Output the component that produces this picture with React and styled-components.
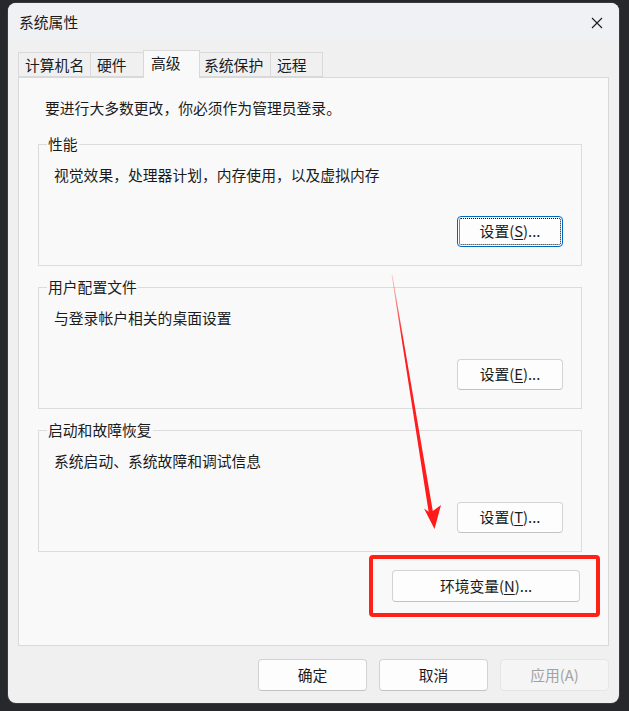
import styled, { createGlobalStyle } from "styled-components";

const Global = createGlobalStyle`
  html, body {
    margin: 0;
    padding: 0;
    background: #27282b;
  }
  body {
    font-family: "Noto Sans CJK SC", "Noto Sans", sans-serif;
    font-size: 14.8px;
    color: #1b1b1b;
    text-spacing-trim: space-all;
  }
`;

const Page = styled.div`
  position: relative;
  width: 629px;
  height: 711px;
  padding: 3px 10px 0 8px;
  box-sizing: border-box;
`;

const Window = styled.div`
  width: 611px;
  height: 700px;
  border-radius: 8px;
  overflow: hidden;
  background: #f0f0f0;
  display: flex;
  flex-direction: column;
  box-shadow: 0 0 0 1px #3a3b3e;
`;

const TitleBar = styled.div`
  height: 37px;
  flex: none;
  background: #eff1f5;
  display: flex;
  align-items: center;
  justify-content: space-between;
  padding: 0 12px 0 11px;
  line-height: 20px;
`;

const CloseBtn = styled.div`
  width: 20px;
  height: 20px;
  display: flex;
  align-items: center;
  justify-content: center;
  margin-top: 3px;
`;

const Body = styled.div`
  flex: 1;
  display: flex;
  flex-direction: column;
  padding: 10px 10px 12px 10px;
`;

const TabRow = styled.div`
  height: 27px;
  display: flex;
  align-items: flex-end;
  padding-left: 1px;
  position: relative;
  z-index: 1;
`;

const Tab = styled.div`
  box-sizing: border-box;
  width: ${(p) => p.$w}px;
  height: ${(p) => (p.$active ? 28 : 25)}px;
  margin: ${(p) => (p.$active ? "0 -2px -1px -2px" : "0 0 0 -1px")};
  padding-left: ${(p) => (p.$active ? 7 : 6)}px;
  padding-top: 2px;
  border: 1px solid #d9d9d9;
  border-bottom: ${(p) => (p.$active ? "none" : "1px solid #d9d9d9")};
  background: ${(p) => (p.$active ? "#f9f9f9" : "#f0f0f0")};
  line-height: 20px;
  white-space: nowrap;
  position: relative;
  z-index: ${(p) => (p.$active ? 2 : 1)};
`;

const Panel = styled.div`
  height: 569px;
  box-sizing: border-box;
  background: #f9f9f9;
  border: 1px solid #d9d9d9;
  padding: 20px 26px 0 19px;
  display: flex;
  flex-direction: column;
`;

const Intro = styled.div`
  line-height: 20px;
  margin-left: 7px;
`;

const Group = styled.div`
  border: 1px solid #dcdcdc;
  margin-top: ${(p) => p.$mt}px;
  padding: 0 18px 18px 15px;
  display: flex;
  flex-direction: column;
`;

const Legend = styled.div`
  align-self: flex-start;
  margin: -11px 0 0 -7px;
  padding: 0 1px;
  background: #f9f9f9;
  line-height: 20px;
`;

const Desc = styled.div`
  margin-top: 11px;
  line-height: 20px;
`;

const ButtonRow = styled.div`
  display: flex;
  justify-content: flex-end;
  margin-top: ${(p) => p.$mt || 0}px;
  padding-right: ${(p) => p.$pr || 0}px;
`;

const Button = styled.div`
  box-sizing: border-box;
  width: ${(p) => p.$w}px;
  height: ${(p) => p.$h || 31}px;
  display: flex;
  align-items: center;
  justify-content: center;
  background: ${(p) => (p.$disabled ? "#f5f5f5" : "#fdfdfd")};
  border: 1px solid ${(p) => (p.$focus ? "#0067c0" : p.$disabled ? "#e6e6e6" : "#d3d3d3")};
  border-bottom-color: ${(p) => (p.$focus ? "#0067c0" : p.$disabled ? "#e6e6e6" : "#c2c2c2")};
  border-radius: 4px;
  color: ${(p) => (p.$disabled ? "#a2a2a2" : "#1b1b1b")};
  line-height: 20px;
  position: relative;
  padding-bottom: 1px;

  ${(p) =>
    p.$focus &&
    `
    &::after {
      content: "";
      position: absolute;
      inset: 1px;
      border: 1px dotted #111;
      border-radius: 2px;
    }
  `}

  u {
    text-underline-offset: 2px;
  }
`;

const Footer = styled.div`
  margin-top: 13px;
  display: flex;
  justify-content: flex-end;
  gap: 12px;
`;

const Highlight = styled.div`
  position: absolute;
  left: 369px;
  top: 555px;
  width: 231px;
  height: 62px;
  box-sizing: border-box;
  border: 4px solid #ff2115;
  border-radius: 4px;
  pointer-events: none;
`;

const Overlay = styled.svg`
  position: absolute;
  left: 0;
  top: 0;
  pointer-events: none;
`;

const tabs = [
  { label: "计算机名", w: 73 },
  { label: "硬件", w: 55 },
  { label: "高级", w: 57, active: true },
  { label: "系统保护", w: 74 },
  { label: "远程", w: 53 },
];

const groups = [
  { title: "性能", desc: "视觉效果，处理器计划，内存使用，以及虚拟内存", key: "S", focus: true, mt: 26 },
  { title: "用户配置文件", desc: "与登录帐户相关的桌面设置", key: "E", mt: 21 },
  { title: "启动和故障恢复", desc: "系统启动、系统故障和调试信息", key: "T", mt: 21 },
];

export default function App() {
  return (
    <>
      <Global />
      <Page>
        <Window>
          <TitleBar>
            <span>系统属性</span>
            <CloseBtn>
              <svg width="12" height="12" viewBox="0 0 12 12">
                <path d="M1 1 L11 11 M11 1 L1 11" stroke="#1b1b1b" strokeWidth="1.1" />
              </svg>
            </CloseBtn>
          </TitleBar>
          <Body>
            <TabRow>
              {tabs.map((t) => (
                <Tab key={t.label} $w={t.w} $active={t.active}>
                  {t.label}
                </Tab>
              ))}
            </TabRow>
            <Panel>
              <Intro>要进行大多数更改，你必须作为管理员登录。</Intro>
              {groups.map((g) => (
                <Group key={g.title} $mt={g.mt}>
                  <Legend>{g.title}</Legend>
                  <Desc>{g.desc}</Desc>
                  <ButtonRow $mt={31}>
                    <Button $w={106} $focus={g.focus}>
                      设置(<u>{g.key}</u>)...
                    </Button>
                  </ButtonRow>
                </Group>
              ))}
              <ButtonRow $mt={18} $pr={2}>
                <Button $w={188} $h={32}>
                  环境变量(<u>N</u>)...
                </Button>
              </ButtonRow>
            </Panel>
            <Footer>
              <Button $w={109} $h={32}>确定</Button>
              <Button $w={109} $h={32}>取消</Button>
              <Button $w={109} $h={32} $disabled>
                应用(A)
              </Button>
            </Footer>
          </Body>
        </Window>
        <Highlight />
        <Overlay width="629" height="711" viewBox="0 0 629 711">
          <defs>
            <linearGradient id="fade" x1="0" y1="275" x2="0" y2="529" gradientUnits="userSpaceOnUse">
              <stop offset="0" stopColor="#ff2a2a" stopOpacity="0.25" />
              <stop offset="0.25" stopColor="#ff1f1f" stopOpacity="1" />
              <stop offset="1" stopColor="#ff1a1a" stopOpacity="1" />
            </linearGradient>
          </defs>
          <polygon
            points="391.6,275 392.4,275 432.8,511 441,505 434.5,529 424,508.5 428.6,511.8"
            fill="url(#fade)"
          />
        </Overlay>
      </Page>
    </>
  );
}
